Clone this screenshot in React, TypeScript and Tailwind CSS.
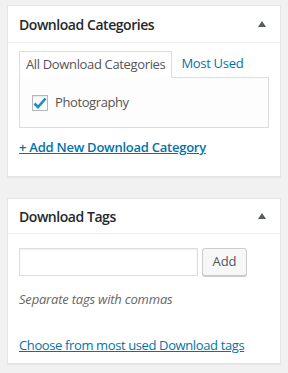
import React from "react";

function Triangle() {
  return (
    <svg width="8" height="6" viewBox="0 0 8 6" className="block">
      <path d="M4 0 L8 6 L0 6 Z" fill="#555d66" />
    </svg>
  );
}

export default function App() {
  return (
    <div
      className="w-[288px] h-[373px] bg-[#f1f1f1] pt-[5px] px-[7px] text-[13px] text-[#444]"
      style={{ fontFamily: '"Open Sans", "Noto Sans", sans-serif' }}
    >
      <div className="bg-white border border-[#e5e5e5] shadow-[0_1px_1px_rgba(0,0,0,0.04)] h-[172px]">
        <div className="h-[37px] flex items-center justify-between pl-[11px] pr-[14px] border-b border-[#eee]">
          <span className="text-[14px] font-semibold text-[#23282d] tracking-[-0.45px]">Download Categories</span>
          <Triangle />
        </div>
        <div className="px-[11px] pt-[8px]">
          <div className="flex items-end">
            <div className="h-[27px] px-[6px] border border-[#ddd] border-b-0 bg-white relative z-10 -mb-px flex items-center text-[#555] tracking-[-0.35px]">
              All Download Categories
            </div>
            <div className="h-[26px] px-[9px] flex items-center text-[#0073aa] tracking-[-0.3px]">Most Used</div>
          </div>
          <div className="h-[51px] border border-[#ddd] bg-[#fdfdfd] flex items-center pl-[12px]">
            <span className="w-[16px] h-[16px] border border-[#b4b9be] bg-white shadow-[inset_0_1px_2px_rgba(0,0,0,0.1)] flex items-center justify-center">
              <svg width="14" height="12" viewBox="0 0 14 12">
                <path d="M1.5 6.5 L5 10 L12.5 1.5" stroke="#1e8cbe" strokeWidth="2.6" fill="none" />
              </svg>
            </span>
            <span className="ml-[7px] text-[#555] tracking-[-0.4px]">Photography</span>
          </div>
          <div className="mt-[10px] text-[#0073aa] underline font-semibold tracking-[-0.25px]">+ Add New Download Category</div>
        </div>
      </div>

      <div className="mt-[21px] bg-white border border-[#e5e5e5] shadow-[0_1px_1px_rgba(0,0,0,0.04)] h-[166px]">
        <div className="h-[35px] flex items-center justify-between pl-[11px] pr-[14px] border-b border-[#eee]">
          <span className="text-[14px] font-semibold text-[#23282d] tracking-[-0.45px]">Download Tags</span>
          <Triangle />
        </div>
        <div className="px-[11px] pt-[14px]">
          <div className="flex items-center gap-[4px]">
            <div className="w-[179px] h-[28px] border border-[#ddd] bg-white shadow-[inset_0_1px_2px_rgba(0,0,0,0.07)]" />
            <div className="w-[45px] h-[28px] border border-[#ccc] bg-[#f7f7f7] rounded-[3px] shadow-[0_1px_0_#ccc] flex items-center justify-center text-[#555]">
              Add
            </div>
          </div>
          <div className="mt-[14px] italic text-[#666] tracking-[-0.2px]">Separate tags with commas</div>
          <div className="mt-[26px] text-[#0073aa] underline tracking-[-0.38px]">Choose from most used Download tags</div>
        </div>
      </div>
    </div>
  );
}
